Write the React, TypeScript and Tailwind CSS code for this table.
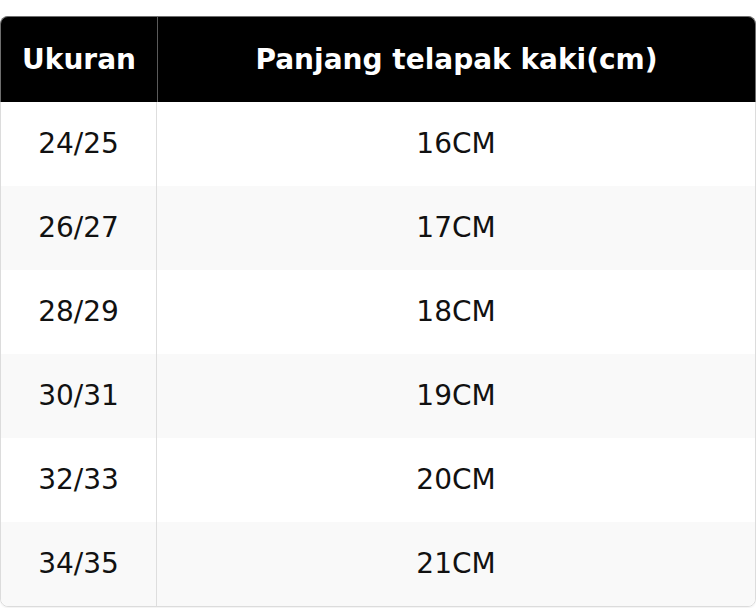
const rows = [
  ['24/25', '16CM'],
  ['26/27', '17CM'],
  ['28/29', '18CM'],
  ['30/31', '19CM'],
  ['32/33', '20CM'],
  ['34/35', '21CM'],
];

export default function App() {
  return (
    <div className="w-[756px] h-[608px] bg-white pt-4" style={{ fontFamily: '"DejaVu Sans", sans-serif' }}>
      <div className="rounded-lg border border-[#dcdcdc] shadow-[0_1px_2px_rgba(0,0,0,0.06)]">
        {/* Header */}
        <div className="-mx-px -mt-px grid grid-cols-[157px_1fr] rounded-t-lg border border-b-0 border-[#6e6e6e] bg-black text-white font-bold text-[28px]">
          <div className="h-[85px] flex items-center justify-center border-r border-[#5a5a5a]">Ukuran</div>
          <div className="h-[85px] flex items-center justify-center">Panjang telapak kaki(cm)</div>
        </div>
        {/* Body */}
        {rows.map(([size, len], i) => (
          <div
            key={size}
            className={`grid grid-cols-[156px_1fr] text-[28px] text-[#111] ${
              i % 2 === 1 ? 'bg-[#f9f9f9]' : 'bg-white'
            } ${i === rows.length - 1 ? 'rounded-b-lg' : ''}`}
          >
            <div className="h-[84px] flex items-center justify-center border-r border-[#dedede]">{size}</div>
            <div className="h-[84px] flex items-center justify-center">{len}</div>
          </div>
        ))}
      </div>
    </div>
  );
}
